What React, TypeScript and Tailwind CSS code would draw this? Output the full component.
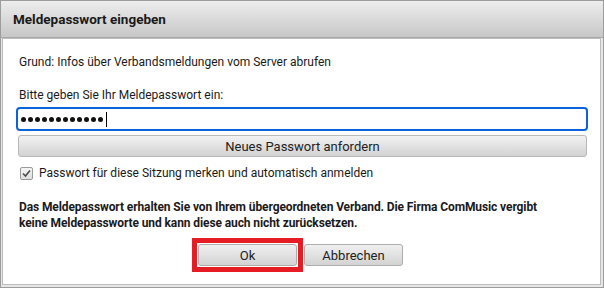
import React from "react";

const font = { fontFamily: 'Roboto, "Liberation Sans", sans-serif' };

export default function App() {
  return (
    <div
      className="w-[604px] h-[288px] flex flex-col bg-[#e6e6e6] border border-[#9c9c9c] text-[#1a1a1a] overflow-hidden"
      style={font}
    >
      {/* Titelleiste */}
      <div className="h-[37px] shrink-0 flex items-center px-[12px] bg-gradient-to-b from-[#ededed] to-[#c7c7c7] border-b border-[#a9a9a9]">
        <span className="text-[13.5px] font-bold">Meldepasswort eingeben</span>
      </div>

      {/* Inhalt */}
      <div className="flex-1 ml-[1px] mr-[2px] mb-[2px] bg-white border border-[#bcbcbc] px-[13px] pt-[15px] flex flex-col text-[12px]">
        <div className="h-[16px] leading-[16px] ml-[3px]">
          Grund: Infos über Verbandsmeldungen vom Server abrufen
        </div>
        <div className="h-[16px] leading-[16px] ml-[3px] mt-[17px]">
          Bitte geben Sie Ihr Meldepasswort ein:
        </div>

        <div className="mt-[4px] h-[24px] w-[572px] rounded-[4px] border-2 border-[#0a63d8] flex items-center pl-[3px] gap-[2px]">
          {Array.from({ length: 12 }).map((_, i) => (
            <span key={i} className="w-[5px] h-[5px] rounded-full bg-[#111]" />
          ))}
          <span className="w-px h-[15px] bg-black ml-[1px]" />
        </div>

        <button className="mt-[4px] ml-[2px] h-[22px] w-[569px] rounded-[3px] border border-[#b8b8b8] bg-gradient-to-b from-[#f2f2f2] to-[#d2d2d2] text-[13px] text-[#222] leading-none">
          Neues Passwort anfordern
        </button>

        <label className="mt-[8px] ml-[4px] flex items-center gap-[6px] h-[16px]">
          <span className="w-[13px] h-[13px] border border-[#9a9a9a] rounded-[2px] bg-gradient-to-b from-[#f4f4f4] to-[#dedede] flex items-center justify-center">
            <svg width="9" height="9" viewBox="0 0 9 9">
              <path d="M1 4.5 L3.5 7 L8 1.5" fill="none" stroke="#4a4a4a" strokeWidth="1.6" />
            </svg>
          </span>
          <span className="leading-[16px]">Passwort für diese Sitzung merken und automatisch anmelden</span>
        </label>

        <div className="mt-[18px] ml-[3px] font-bold leading-[16px] tracking-[-0.1px]">
          Das Meldepasswort erhalten Sie von Ihrem übergeordneten Verband. Die Firma ComMusic vergibt
          <br />
          keine Meldepassworte und kann diese auch nicht zurücksetzen.
        </div>

        <div className="mt-[7px] flex justify-center">
          <div className="ml-[-8px] border-[5px] border-[#e61c24] p-px">
            <button className="w-[99px] h-[22px] rounded-[3px] border border-[#adadad] bg-gradient-to-b from-[#f0f0f0] to-[#d3d3d3] text-[13px] text-[#222] leading-none">
              Ok
            </button>
          </div>
          <button className="mt-[6px] ml-[1px] w-[99px] h-[22px] rounded-[3px] border border-[#adadad] bg-gradient-to-b from-[#f0f0f0] to-[#d3d3d3] text-[13px] text-[#222] leading-none">
            Abbrechen
          </button>
        </div>
      </div>
    </div>
  );
}
